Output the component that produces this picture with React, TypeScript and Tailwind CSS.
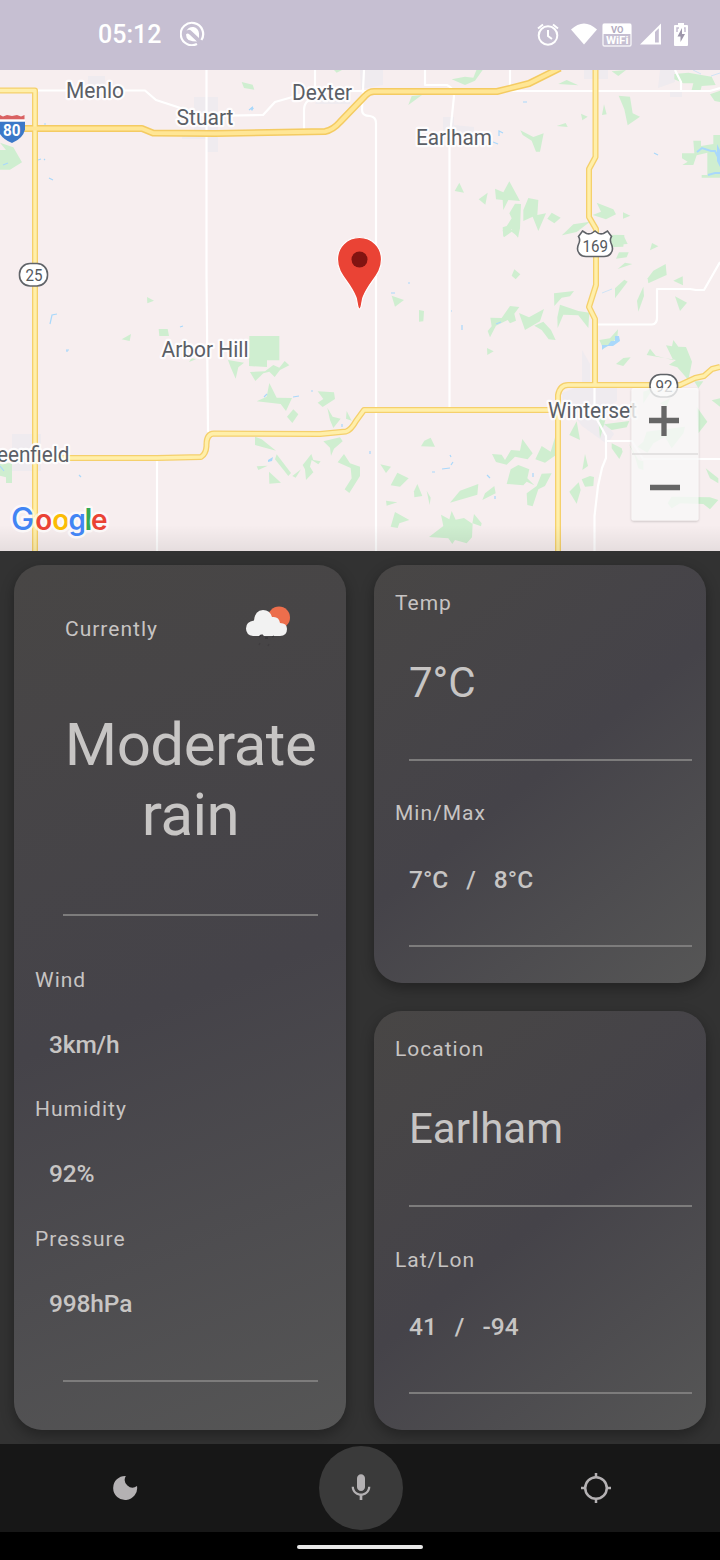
import React from "react";

const LOCAL_ROADS = [
  "M36 90.5H145L156 100L205 116L263 115L275 102L310 92L355 91H440",
  "M206.5 70V275L208 432",
  "M315 70V98Q304 100 304 110V130",
  "M364 70L362 110Q362 116 370 116Q376 117 376 123V551",
  "M425 70V85H447Q454 88 454 96L449.500 140V410",
  "M510 70V91M470 91H710L720 88",
  "M675 70L681 82V91",
  "M597 324.500H652Q657 324 657 318V289H690L696 290H704L720 262",
  "M157 458V551",
  "M594.500 384V415L606 436V458L602 468L598 486L594.500 516V551M606 441H632L643 459H720",
];
const STATE_ROADS = [
  "M0 90.500H35V551",
  "M35 458H157L201 457Q206 454 206.500 446Q206 434 214 433.500L320 434L346 431.500Q351 430 356 421L364 410H558",
  "M558 551V395Q560 385 568 385H680L695 378L704 376L712 369L720 367",
  "M595.500 70V157L589 169V217L596 229V285L589 307L595 319V384",
];
const INTERSTATE = "M0 128.500H142L153 133L215 133.500L325 131.500Q333 130 340 122L365 96Q369 91.500 374 91.500H497L529 83.500L560 68";

const GREEN_NW = [
  "725,246 758,254 763,269 732,264", "1000,208 1030,208 1010,218", "0,428 40,442 66,487 30,509 0,509 0,450 18,450",
];
const GREEN_NE = [
  "350,208 368,210 345,242 315,255 275,238 315,230 340,233", "755,214 798,210 775,228", "155,288 186,285 145,315", "595,252 620,240 655,256",
  "776,287 810,290 818,340 840,350 803,376 793,328", "732,313 740,343 726,345", "663,341 683,350 667,361", "590,378 617,369 623,381",
  "481,391 520,411 551,400 540,455 528,455 515,422 488,405", "943,222 985,218 1055,230 1067,255 1025,258 1022,270 995,270 1000,250 970,250 943,238",
  "1050,283 1080,272 1080,306 1064,303", "1000,422 1023,422 1023,438 1060,432 1060,405 1080,405 1080,533 1025,533 1025,525 1042,525 1042,458 1010,466 1000,495 967,495 983,485 966,475 966,460 1003,460",
  "298,548 312,578 284,573", "383,578 376,614 356,598", "405,566 430,577 448,544 480,603 445,600 430,630 428,600 408,598",
  "465,611 483,612 480,685 474,713 455,688 430,710 428,682 440,678 455,655 448,640", "505,594 535,600 532,645 558,640 535,693 518,650 490,663 490,630",
  "575,638 602,653 583,670 562,656", "710,608 760,628 768,643 738,658 698,645 723,635", "789,637 811,647 789,656", "606,706 640,673 690,665 650,696",
  "725,705 793,705 790,740 745,742",
];
const GREEN_SW = [
  "441,201 462,212 442,220", "365,328 393,312 389,333", "476,297 503,297 507,318 478,318", "748,318 838,318 838,391 801,391 801,411 747,408",
  "684,390 732,398 715,412 707,446 692,412", "750,426 795,424 820,405 838,413 854,393 868,406 840,420 824,441 808,425 790,430 766,453", "567,396 575,384 588,388",
  "808,459 830,503 876,504 858,543 842,522 770,514 800,500", "880,538 895,553 877,579 861,560", "953,484 1002,487 1005,507 968,531 953,518 970,507",
  "982,533 998,560 1022,566 1000,594 990,570", "1040,543 1055,572 1038,566", "765,620 785,628 828,662 765,645", "970,634 1020,622 1028,634 1002,656 993,677 990,653",
  "770,709 803,707 775,720", "830,673 873,729 865,738 825,688", "807,725 843,758 808,761", "903,718 887,743 877,738", "934,672 940,690 962,694 955,703 935,690 930,710 940,727 918,750 915,718 908,705 920,690",
  "1032,672 1050,700 1080,710 1080,738 1048,789 1034,778 1055,745 1052,714 1013,697", "0,700 36,700 36,759 18,759 18,742 0,737",
];
const GREEN_SE = [
  "428,0 470,0 475,20 455,5 432,22", "606,14 635,0 660,0", "740,14 790,15 803,42 755,45", "876,39 895,49 870,61", "777,67 806,67 800,82 768,86",
  "773,117 795,98 817,102", "765,175 793,149 803,155 765,205", "463,118 481,133 467,148 455,137", "917,102 920,135 898,145 865,160 863,145 880,122", "940,152 968,139 969,166",
  "850,170 852,198 835,245 831,212", "945,199 981,218 960,243", "95,197 132,210 105,230", "177,240 192,243 190,274 177,275", "582,190 642,183 630,199 605,203 583,228",
  "600,224 655,243 688,248 685,294 655,256 610,254 593,294 592,262", "450,228 478,231 463,251 468,272 450,280 443,270 408,287 390,322 383,303 395,289 391,263 425,264",
  "477,249 507,262 552,237 540,274 495,300", "523,287 550,275 573,300 587,330 566,328 545,300", "381,354 401,364 382,375", "718,330 750,325 774,298 772,325 730,357",
  "768,402 790,384 812,382 790,408", "870,356 887,377 940,391 918,346 936,349 940,330 955,350 978,351 996,395 985,450 952,412 927,404 948,390 860,375",
  "1003,454 1030,454 1015,475", "1055,511 1080,505 1080,530", "1010,530 1042,575 1015,610", "650,574 660,630 628,615", "725,550 738,563 720,625 716,580", "732,583 808,573 800,592 755,600",
  "212,623 225,650 183,649 193,632", "61,703 93,710 78,729", "487,627 518,670 503,688 465,680 440,704 408,696 396,672 425,674 435,690 453,660 480,662",
  "545,648 572,665 587,616 588,675 555,698 526,688", "452,718 475,705 508,718 502,745 523,766 500,755 490,766 440,762", "545,731 575,730 555,768 535,778 518,829 502,825 500,790 530,768",
  "112,728 146,745 120,770 92,766", "172,762 187,798 163,802 162,784", "200,782 212,803 209,825", "355,762 352,794 270,818 300,782", "403,768 407,790 367,810 375,790", "78,812 112,817 80,827",
  "105,846 148,870 118,880 113,894 92,890", "275,843 287,869 312,864 337,881 342,852 365,880 363,889 338,880 336,922 320,940 285,930 277,942 265,925 207,921 250,888 243,854 268,868",
  "675,672 684,708 667,720", "665,748 690,738 702,741 700,768 675,770", "656,757 662,780 650,821 628,785", "755,640 785,655 788,665 778,687 755,655", "806,640 835,690 850,694 850,720 835,715 825,680",
  "1037,715 1075,745 1075,760 1050,745", "923,820 935,800 1050,802 1075,810 1050,838 1030,822 960,820 935,835", "850,485 880,475 850,520", "900,520 930,505 920,530", "860,605 975,590 970,610 935,655 915,620 880,640 862,668 833,650 850,635",
];

function Polys({ items }: { items: string[] }) {
  return <>{items.map((p) => <polygon key={p} points={p} />)}</>;
}

function Label({ x, y, w, children }: { x: number; y: number; w: number; children: string }) {
  return (
    <text x={x} y={y} textLength={w} lengthAdjust="spacingAndGlyphs" fontSize="22" fill="#5b5f66" stroke="#fff" strokeOpacity=".88" strokeWidth="4.500" strokeLinejoin="round" paintOrder="stroke">
      {children}
    </text>
  );
}

function MapView() {
  return (
    <svg viewBox="0 70 720 481" className="block h-[481px] w-full font-[Roboto,sans-serif]">
      <defs>
        <linearGradient id="fade" x1="0" y1="0" x2="0" y2="1">
          <stop offset="0" stopColor="#000" stopOpacity="0" />
          <stop offset="1" stopColor="#000" stopOpacity=".07" />
        </linearGradient>
        <filter id="lift" x="-10%" y="-10%" width="120%" height="120%">
          <feDropShadow dx="0" dy="1" stdDeviation="1.200" floodOpacity=".28" />
        </filter>
      </defs>
      <rect y="70" width="720" height="481" fill="#f7eeef" />
      <g fill="#efebef">
        <path d="M88 76h17v8H88zM194 97h24v42h-36v-4h12zM207 139h11v13h-11zM360 70h23v15l-22 4zM443 117h11v8l20 2v8h-31zM584 70h24v9h-24zM660 70h15v12l-17 6zM670 91h12v6h-12zM320 96l30 2v6h-35zM12 434h29v37H12z" />
        <path d="M582 350l8 14v24h27v13l-19 13 16 20-7 10-25-18-19-25-1-8 20-8z" />
      </g>
      <g fill="#cfeed0">
        <g transform="scale(.33333)"><Polys items={GREEN_NW} /></g>
        <g transform="translate(360 0) scale(.33333)"><Polys items={GREEN_NE} /></g>
        <g transform="translate(0 230) scale(.33333)"><Polys items={GREEN_SW} /></g>
        <g transform="translate(360 230) scale(.33333)"><Polys items={GREEN_SE} /></g>
      </g>
      <g fill="none" stroke="#a9d8fb" strokeWidth="1.200">
        <path d="M50 324l2-9 5-1M66 350h3M67 350v2M180 327l3-1M249 110l4-3M251 108l2-1M38 160l3-1M44 160l1-1M49 178l4 2M44 124h2M3 165l5-2M79 475l2 2M0 466l4 5M264 397l3-3M293 397l6-1M311 391h2M342 424v3" />
        <path d="M499 136v-5l4 2M493 142l5 2M523 102h4M654 153l4 2M391 293h4M408 283h2M451 311h1M462 325v5M496 324l5-2M370 451v3M432 472h3M442 469l8-1M451 465l2-3M450 455l1 2M487 475l3 3M495 496v3M533 473v4" />
        <path d="M602 293l10-4M693 70l8 4M711 76l9-3" strokeWidth=".5" />
        <path d="M697 152l5-4 9 3h4l4 8M708 175l7-2h5" strokeWidth="2" />
      </g>
      <path d="M602 345h6l3-4h4v-5h4l1 5-7 5h-5l-4 2-2 2zM717 144l3 6v17l-3-6zM250 108h4l-2 3zM268 460l5-3-1 4-4 1z" fill="#a9d8fb" />
      <g fill="none" stroke="#fff" strokeWidth="2.200" strokeLinejoin="round">
        {LOCAL_ROADS.map((d) => <path key={d} d={d} />)}
      </g>
      <g fill="none" stroke="#f5d06c" strokeWidth="6" strokeLinejoin="round">
        {STATE_ROADS.map((d) => <path key={d} d={d} />)}
      </g>
      <path d={INTERSTATE} fill="none" stroke="#f4cb62" strokeWidth="7" strokeLinejoin="round" />
      <g fill="none" stroke="#ffefaa" strokeWidth="3.400" strokeLinejoin="round">
        {STATE_ROADS.map((d) => <path key={d} d={d} />)}
      </g>
      <path d={INTERSTATE} fill="none" stroke="#ffe695" strokeWidth="4" strokeLinejoin="round" />

      <Label x={66} y={97.500} w={58}>Menlo</Label>
      <Label x={176.500} y={124.500} w={57}>Stuart</Label>
      <Label x={292} y={99.500} w={60}>Dexter</Label>
      <Label x={416} y={144.500} w={76}>Earlham</Label>
      <Label x={161.500} y={356.500} w={87}>Arbor Hill</Label>
      <Label x={-3} y={461.500} w={72.500}>eenfield</Label>
      <Label x={548} y={417.500} w={89}>Winterset</Label>

      <g fill="#fff" stroke="#606368" strokeWidth="1.600">
        <rect x="19.500" y="263.500" width="28" height="22.500" rx="10.500" />
        <rect x="650" y="374.500" width="27.500" height="22.500" rx="10.500" />
        <path d="M582.500 231l4 2.500q4 1.500 8.500-2.500q4 4 8.500 2.500l4-2.500l4 5.500q-2 3-.5 6.500q3 6.500 0 10q-2 3.500-7 3.500h-18q-5 0-7-3.500q-3-3.500 0-10q1.500-3.500-.5-6.500z" />
      </g>
      <g fill="#55595e" fontSize="16">
        <text x="25.500" y="280.500" textLength="17" lengthAdjust="spacingAndGlyphs">25</text>
        <text x="655.500" y="391.500" textLength="17" lengthAdjust="spacingAndGlyphs">92</text>
        <text x="582.500" y="251.500" textLength="25.500" lengthAdjust="spacingAndGlyphs">169</text>
      </g>
      <path d="M0 115l3 1.500 4-1.500 5 1 5-1 4 1.500 3.500-1.500V119.500H0z" fill="#d96162" />
      <path d="M0 121.500h25v8q-2 9-13 13.500Q4 140 0 134z" fill="#3b78c8" />
      <path d="M0 120.500h25" stroke="#fff" strokeWidth="2" />
      <text x="3" y="136" fill="#fff" fontSize="16" fontWeight="700" textLength="17.500" lengthAdjust="spacingAndGlyphs">80</text>

      <path d="M359.500 237.500c-12.500 0-22 9.500-22 22c0 15.500 12 21 18.500 38c1.500 4 1.200 11.500 3.500 11.500s2-7.500 3.500-11.500c6.500-17 18.500-22.500 18.500-38c0-12.500-9.500-22-22-22z" fill="#ea4335" stroke="#fff" strokeWidth="1.200" />
      <circle cx="359.500" cy="259.500" r="8" fill="#811411" />

      <rect y="525" width="720" height="26" fill="url(#fade)" />
      <text y="529.500" fontSize="28" fontWeight="600" stroke="#fff" strokeOpacity=".65" strokeWidth="5" strokeLinejoin="round" paintOrder="stroke" className="font-[Inter,sans-serif]">
        <tspan x="11" fontSize="31" fontWeight="500" fill="#4285f4">G</tspan>
        <tspan x="35.200" fill="#ea4335">o</tspan>
        <tspan x="52.200" fill="#fbbc05">o</tspan>
        <tspan x="68.500" fill="#4285f4">g</tspan>
        <tspan x="84.500" fontSize="30" fill="#34a853">l</tspan>
        <tspan x="91" fill="#ea4335">e</tspan>
      </text>

      <g filter="url(#lift)">
        <rect x="631.500" y="388" width="67" height="132.500" rx="2" fill="#fff" fillOpacity=".75" />
      </g>
      <path d="M632 454h66" stroke="#dedbdb" strokeWidth="1.500" />
      <path d="M649 420.500h30M664 406v30M650 487.500h30" stroke="#666" strokeWidth="5.300" />
    </svg>
  );
}

function StatusBar() {
  return (
    <header className="flex h-[70px] items-center bg-[#c6bfd2] pr-[30px] pl-[98px] text-white">
      <span className="w-[82px] text-[25px] leading-[30px] font-medium">05:12</span>
      <svg viewBox="180 21 25 25" className="mb-1 h-[25px] w-[25px]" fill="none" stroke="#fff" strokeWidth="2.200">
        <path d="M197 44A11.200 11.200 0 1 1 201.400 40" />
        <path d="M186.500 31q2-4.500 7-4q5 1 5.500 6.500v4.500l-7.500-7q-2.500-2.500-5 0zM186 34.500q1.500-2 3.500 0l7.500 7q-4.500 0-8.500-1.500q-2.500-2-2.500-5.500z" fill="#fff" stroke="none" />
      </svg>
      <svg viewBox="535 20 155 28" className="ml-auto h-7 w-[155px]">
        <g fill="none" stroke="#fff" strokeWidth="2">
          <circle cx="548" cy="34.500" r="9.300" />
          <path d="M548 29v6l4 3M538 27.500l5-4M558 27.500l-5-4" />
        </g>
        <path d="M571 28.500Q584 16.500 597 28.500L584 43.500z" fill="#fff" />
        <rect x="603" y="23" width="28" height="22" rx="1.500" fill="none" stroke="#fff" strokeOpacity=".8" strokeWidth="1.400" />
        <path d="M603 23h28v10h-28z" fill="#fff" />
        <g fontSize="9" fontWeight="700" className="font-[Roboto,sans-serif]">
          <text x="611" y="31.500" fill="#b3abc0" textLength="12.500" lengthAdjust="spacingAndGlyphs">VO</text>
          <text x="606" y="43" fill="#fff" fontSize="10.500" textLength="22.500" lengthAdjust="spacingAndGlyphs">WiFi</text>
        </g>
        <path d="M640 43.500L661 22.500V43.500z" fill="#fff" />
        <path d="M655 31l3.800-3.800V41.500H655z" fill="#c6bfd2" />
        <path d="M678 22h6v2h3q1 0 1 1v19q0 1-1 1h-12q-1 0-1-1V25q0-1 1-1h3z" fill="#fff" />
        <path d="M682 27l-4.500 8.500h3V41l4.500-8h-3z" fill="#9e97ab" />
        <path d="M677 31v-4h2M685 31v-4h-1" stroke="#c6bfd2" fill="none" strokeWidth="1.500" />
      </svg>
    </header>
  );
}

const CARD = "flex flex-col rounded-[28px] shadow-[0_5px_14px_rgba(0,0,0,0.32)]";

function Caption({ children }: { children: string }) {
  return <div className="h-[30px] text-[21px] leading-[30px] tracking-[1px] text-[#c7c4c3]">{children}</div>;
}

function Reading({ name, value }: { name: string; value: string }) {
  return (
    <div className="flex flex-col gap-[34px] pl-[21px]">
      <Caption>{name}</Caption>
      <div className="h-[31px] pl-3.5 text-[24.5px] leading-[32px] font-medium tracking-[-0.15px]">{value}</div>
    </div>
  );
}

function InfoCard({ title, main, subtitle, a, b, extra }: { title: string; main: string; subtitle: string; a: string; b: string; extra?: boolean }) {
  return (
    <section className={`${CARD} bg-[linear-gradient(141.500deg,#484645_0%,#454349_50%,#565656_100%)] ${extra ? "h-[419px]" : "h-[418px]"} pt-[23px] pr-3.5 pl-[21px]`}>
      <Caption>{title}</Caption>
      <div className="mt-[39px] h-[50px] pl-3.5 text-[42px] leading-[52px]">{main}</div>
      <hr className="mt-[52px] ml-3.5 h-0.5 border-0 bg-[#7d7c7c]" />
      <div className={extra ? "mt-[38px]" : "mt-[37px]"}>
        <Caption>{subtitle}</Caption>
      </div>
      <div className="mt-9 flex h-[31px] gap-[18px] pl-3.5 text-[24.5px] leading-[31px] font-medium">
        <span>{a}</span>
        <span>/</span>
        <span>{b}</span>
      </div>
      <hr className="mt-[50px] ml-3.5 h-0.5 border-0 bg-[#7d7c7c]" />
    </section>
  );
}

function WeatherIcon() {
  return (
    <svg viewBox="240 600 60 50" className="h-[50px] w-[60px]">
      <circle cx="279" cy="617.500" r="11" fill="#ec6e4c" />
      <path d="M253 636q-7-1-7-7.500q0-7 8-8q1-10.500 9-10.500q7 0 9 7q7-1 8 6q7 0 7 6q0 7-7 7h-16l-2-2-2 2z" fill="#f2f2f2" />
      <path d="M259 637l2-2M265 638h3M272 637l2-1" stroke="#373638" strokeWidth="1.300" />
      <path d="M260 643l-1 2M269 644l-1 2" stroke="#403e40" strokeWidth="1.500" />
    </svg>
  );
}

export default function App() {
  return (
    <div className="flex h-[1560px] w-[720px] flex-col overflow-hidden bg-[#323232] font-[Roboto,sans-serif] text-[#c7c5c4]">
      <StatusBar />
      <MapView />
      <main className="grid h-[893px] grid-cols-2 gap-7 p-3.5">
        <section className={`${CARD} h-[865px] bg-[linear-gradient(159deg,#484645_0%,#454349_50%,#565656_100%)]`}>
          <div className="mt-[35px] flex h-[50px] items-center justify-between pr-[46px] pl-[51px]">
            <div className="mt-2">
              <Caption>Currently</Caption>
            </div>
            <WeatherIcon />
          </div>
          <h1 className="mt-[60px] ml-[49px] h-[140px] w-[255px] text-center text-[60px] leading-[70px] font-normal tracking-[-0.5px]">Moderate rain</h1>
          <hr className="mt-16 mr-7 ml-[49px] h-0.5 border-0 bg-[#7d7c7c]" />
          <div className="mt-[49px] flex flex-col gap-[34px]">
            <Reading name="Wind" value="3km/h" />
            <Reading name="Humidity" value="92%" />
            <div className="mt-px">
              <Reading name="Pressure" value="998hPa" />
            </div>
          </div>
          <hr className="mt-[61px] mr-7 ml-[49px] h-0.5 border-0 bg-[#7d7c7c]" />
        </section>
        <div className="flex flex-col gap-7">
          <InfoCard title="Temp" main="7°C" subtitle="Min/Max" a="7°C" b="8°C" />
          <InfoCard title="Location" main="Earlham" subtitle="Lat/Lon" a="41" b="-94" extra />
        </div>
      </main>
      <nav className="grid h-[88px] grid-cols-[250px_222px_248px] place-items-center bg-[#171717]">
        <button aria-label="Night mode">
          <svg viewBox="0 0 26 26" className="h-[26px] w-[26px]">
            <path d="M13.800 1A7.700 7.700 0 0 0 25 11A12 12 0 1 1 13.800 1z" fill="#b4b1b3" />
          </svg>
        </button>
        <button aria-label="Voice" className="flex h-[84px] w-[84px] items-center justify-center rounded-full bg-[#3a3a3a]">
          <svg viewBox="0 0 24 24" className="h-8 w-8" fill="#b4b1b3">
            <path d="M12 14.200c1.660 0 3-1.340 3-3V4.700c0-1.660-1.340-3-3-3S9 3.040 9 4.700v6.500c0 1.660 1.340 3 3 3z" />
            <path d="M17.300 11c0 3-2.540 5.100-5.300 5.100S6.700 14 6.700 11H5c0 3.410 2.720 6.230 6 6.720V21h2v-3.280c3.280-.48 6-3.300 6-6.720z" />
          </svg>
        </button>
        <button aria-label="My location">
          <svg viewBox="0 0 30 30" className="h-[30px] w-[30px]" fill="none" stroke="#b4b1b3" strokeWidth="2.500">
            <circle cx="15" cy="15" r="10.800" />
            <path d="M15 0v4M15 26v4M0 15h4M26 15h4" />
          </svg>
        </button>
      </nav>
      <footer className="flex h-7 items-center justify-center bg-black pt-0.5">
        <div className="h-1 w-[126px] rounded-full bg-[#e8e8e8]" />
      </footer>
    </div>
  );
}
